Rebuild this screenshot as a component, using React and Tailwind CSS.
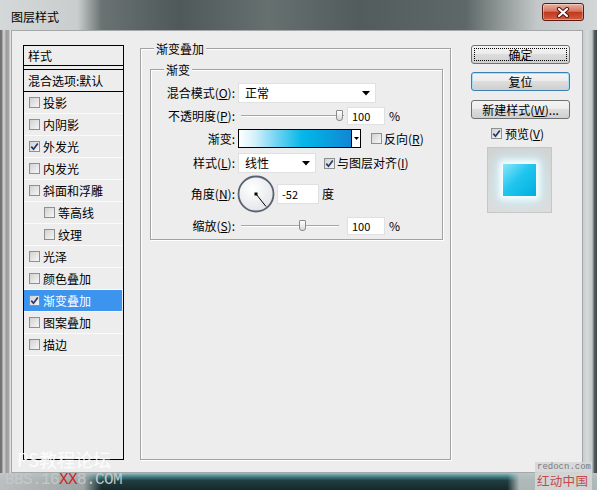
import React from 'react';

const Check = ({ checked }) => (
  <span className="inline-flex h-[11px] w-[11px] shrink-0 items-center justify-center border border-[#8e8f8f] bg-[linear-gradient(135deg,#d2d2d2,#f6f6f6)]">
    {checked && (
      <svg width="9" height="9" viewBox="0 0 9 9">
        <path d="M1.3 4.6 L3.5 7.2 L7.8 1.4" fill="none" stroke="#26386a" strokeWidth="1.7" />
      </svg>
    )}
  </span>
);

const Arrow = () => (
  <svg width="8" height="5" viewBox="0 0 8 5">
    <path d="M0 0 H8 L4 4.5 Z" fill="#000" />
  </svg>
);

const Select = ({ value, width }) => (
  <div className={`flex h-[20px] ${width} items-center justify-between border border-[#e0e0e0] bg-white pl-[6px] pr-[5px]`}>
    <span>{value}</span>
    <Arrow />
  </div>
);

const Field = ({ value, width, ml }) => (
  <div className={`flex h-[18px] ${width} ${ml} items-center border border-[#e0e0e0] bg-white pl-[4px] text-[11px]`}>
    {value}
  </div>
);

const Slider = ({ width, thumb }) => (
  <div className={`relative ml-[3px] flex h-[18px] ${width} items-center`}>
    <div className="h-[2px] w-full border-t border-[#a6a6a6] border-b border-b-white" />
    <div
      className="absolute top-[3px] h-[11px] w-[7px] rounded-b-[3px] rounded-t-[1px] border border-[#8a8a8a] bg-[linear-gradient(180deg,#ffffff,#d8d8d8)]"
      style={{ left: thumb }}
    />
  </div>
);

const Label = ({ children }) => (
  <div className="w-[85px] shrink-0 pr-[1px] text-right">{children}</div>
);

const items = [
  { t: '投影' },
  { t: '内阴影' },
  { t: '外发光', c: true },
  { t: '内发光' },
  { t: '斜面和浮雕' },
  { t: '等高线', sub: true },
  { t: '纹理', sub: true },
  { t: '光泽' },
  { t: '颜色叠加' },
  { t: '渐变叠加', c: true, sel: true },
  { t: '图案叠加' },
  { t: '描边' },
];

const btn =
  'relative flex h-[19px] w-[99px] items-center justify-center rounded-[3px] border bg-[linear-gradient(180deg,#f4f4f4_0%,#ececec_45%,#dddddd_50%,#cfcfcf_100%)]';

export default function App() {
  return (
    <div className="relative h-[490px] w-[597px] overflow-hidden bg-[#2a3636] font-['Noto_Sans_CJK_SC',sans-serif] text-[12px] leading-[14px] text-black">
      {/* title bar */}
      <div className="flex h-[30px] items-start bg-[linear-gradient(90deg,#d4d8d8_0%,#c9cdcd_13%,#6a7272_17%,#4f5959_30%,#66706f_45%,#525c5c_60%,#5e6868_78%,#9aa0a0_85%,#c4c8c8_90%,#d2d6d6_100%)]">
        <span className="ml-[11px] mt-[10px]">图层样式</span>
        <div className="ml-auto mr-[13px] mt-[3px] flex h-[18px] w-[42px] items-center justify-center rounded-[3px] border border-[#5a1a12] bg-[linear-gradient(180deg,#eab0a2_0%,#d8765f_45%,#c0391f_52%,#d45c40_100%)] shadow-[inset_0_0_0_1px_rgba(255,255,255,0.35)]">
          <svg width="14" height="11" viewBox="0 0 14 11">
            <path d="M3 2 L11 9 M11 2 L3 9" stroke="#4a1a12" strokeWidth="4.2" strokeLinecap="round" />
            <path d="M3 2 L11 9 M11 2 L3 9" stroke="#fff" strokeWidth="2.2" strokeLinecap="round" />
          </svg>
        </div>
      </div>

      <div className="flex h-[443px]">
        <div className="w-[11px] bg-[linear-gradient(90deg,#6e6e6e_0px,#7a7a7a_2px,#cfcfcf_3px,#c4c4c4_5px,#9c9c9c_6px,#a8a8a8_9px,#e2e2e2_10px)]" />

        {/* client */}
        <div className="flex flex-1 items-start border border-[#a4a8a8] bg-[#ededed]">
          {/* style list */}
          <div className="ml-[11px] mt-[14px] h-[415px] w-[101px] border border-black">
            <div className="flex h-[20px] items-center border-b border-black pl-[4px]">样式</div>
            <div className="mt-[3px] flex h-[23px] items-center border-y border-black pl-[4px]">混合选项:默认</div>
            {items.map((it) => (
              <div
                key={it.t}
                className={`flex h-[22px] items-center gap-[3px] border-b border-[#fafafa] ${it.sub ? 'pl-[20px]' : 'pl-[5px]'} ${it.sel ? 'mr-[1px] bg-[#3d94ef] text-white' : ''}`}
              >
                <Check checked={it.c} />
                <span>{it.t}</span>
              </div>
            ))}
          </div>

          {/* gradient overlay group */}
          <div className="ml-[16px] mt-[17px] h-[412px] w-[311px] border border-[#a2a2a2] shadow-[inset_1px_1px_0_#fff,1px_1px_0_#fff]">
            <div className="-mt-[7px] ml-[13px] w-fit bg-[#ededed] px-[2px]">渐变叠加</div>
            <div className="ml-[9px] mt-[13px] w-[293px] border border-[#a2a2a2] pb-[4px] shadow-[inset_1px_1px_0_#fff,1px_1px_0_#fff]">
              <div className="-mt-[7px] ml-[13px] w-fit bg-[#ededed] px-[2px]">渐变</div>

              <div className="mt-[6px] flex h-[20px] items-center">
                <Label>混合模式(<span className="underline">O</span>):</Label>
                <div className="ml-[2px]">
                  <Select value="正常" width="w-[138px]" />
                </div>
              </div>

              <div className="mt-[4px] flex h-[18px] items-center">
                <Label>不透明度(<span className="underline">P</span>):</Label>
                <div className="ml-[2px] flex items-center">
                  <Slider width="w-[103px]" thumb={95} />
                  <Field value="100" width="w-[38px]" ml="ml-[3px]" />
                  <span className="ml-[4px]">%</span>
                </div>
              </div>

              <div className="mt-[4px] flex h-[19px] items-center">
                <Label>渐变:</Label>
                <div className="ml-[2px] flex h-[19px] w-[123px] border border-black">
                  <div className="flex-1 bg-[linear-gradient(90deg,#ffffff_0%,#d4f1fa_14%,#6fd3f2_34%,#06b8e9_56%,#05a8e2_72%,#1286d3_100%)]" />
                  <div className="flex w-[9px] items-center justify-center border-l border-black bg-white">
                    <svg width="5" height="3" viewBox="0 0 5 3">
                      <path d="M0 0 H5 L2.5 3 Z" fill="#000" />
                    </svg>
                  </div>
                </div>
                <div className="ml-[10px] flex items-center gap-[2px]">
                  <Check />
                  <span>反向(<span className="underline">R</span>)</span>
                </div>
              </div>

              <div className="mt-[5px] flex h-[20px] items-center">
                <Label>样式(<span className="underline">L</span>):</Label>
                <div className="ml-[2px]">
                  <Select value="线性" width="w-[78px]" />
                </div>
                <div className="ml-[8px] flex items-center gap-[2px]">
                  <Check checked />
                  <span>与图层对齐(<span className="underline">I</span>)</span>
                </div>
              </div>

              <div className="mt-[2px] flex h-[37px] items-center">
                <Label>角度(<span className="underline">N</span>):</Label>
                <svg width="38" height="38" viewBox="0 0 38 38" className="ml-[1px]">
                  <defs>
                    <radialGradient id="dial" cx="40%" cy="35%" r="70%">
                      <stop offset="0%" stopColor="#ffffff" />
                      <stop offset="100%" stopColor="#e2e4e8" />
                    </radialGradient>
                  </defs>
                  <circle cx="19" cy="19" r="17.5" fill="url(#dial)" stroke="#5b6272" strokeWidth="1.8" />
                  <line x1="19" y1="19" x2="29" y2="31.5" stroke="#000" strokeWidth="1" />
                  <rect x="17.5" y="17.5" width="3" height="3" fill="#000" />
                </svg>
                <div className="ml-[2px] flex h-[20px] w-[42px] items-center border border-[#e0e0e0] bg-white pl-[4px] text-[11px]">-52</div>
                <span className="ml-[3px]">度</span>
              </div>

              <div className="mt-[5px] flex h-[18px] items-center">
                <Label>缩放(<span className="underline">S</span>):</Label>
                <div className="ml-[2px] flex items-center">
                  <Slider width="w-[98px]" thumb={58} />
                  <Field value="100" width="w-[38px]" ml="ml-[8px]" />
                  <span className="ml-[4px]">%</span>
                </div>
              </div>
            </div>
          </div>

          {/* buttons */}
          <div className="ml-[20px] mt-[14px] flex flex-col">
            <div className={`${btn} border-[#707070]`}>
              <span className="absolute inset-[2px] border border-dotted border-black" />
              确定
            </div>
            <div className={`${btn} mt-[8px] border-[#3c7fb1] shadow-[inset_0_0_0_1px_#a8def6]`}>复位</div>
            <div className={`${btn} mt-[9px] border-[#707070]`}>
              新建样式(<span className="underline">W</span>)...
            </div>
            <div className="ml-[20px] mt-[8px] flex h-[13px] items-center gap-[3px]">
              <Check checked />
              <span>预览(<span className="underline">V</span>)</span>
            </div>
            <div className="ml-[16px] mt-[7px] flex h-[66px] w-[65px] items-center justify-center border border-[#c6c6c6] bg-[linear-gradient(180deg,#d2d2d2,#dcdcdc)]">
              <div className="h-[32px] w-[33px] bg-[linear-gradient(135deg,#8ae6fb_0%,#22c6ee_45%,#00aee2_100%)] shadow-[0_0_6px_3px_#ffffff,0_0_12px_6px_#c8f4ff]" />
            </div>
          </div>
        </div>

        <div className="w-[14px] bg-[linear-gradient(90deg,#c8cccc_0%,#d6dada_30%,#c2c6c6_65%,#5a6262_80%,#3a4444_100%)]" />
      </div>

      {/* bottom frame */}
      <div className="h-[17px] bg-[linear-gradient(90deg,rgba(196,198,198,0.95)_0%,rgba(180,184,184,0.85)_14%,rgba(0,0,0,0)_17%,rgba(0,0,0,0)_85%,rgba(190,198,198,0.9)_87%),linear-gradient(180deg,#9cc0c2_0%,#4c8a90_18%,#1f3e42_45%,#17282a_100%)]" />

      {/* watermarks */}
      <div className="absolute left-[17px] top-[450px] text-[18px] leading-[18px] text-white/85">PS教程论坛</div>
      <div className="absolute left-[5px] top-[472px] font-['Liberation_Mono',monospace] text-[16px] leading-[16px] tracking-[-0.6px] text-[#c4c8c8]">
        BBS.16<span className="text-[#d42020]">XX</span>8.COM
      </div>
      <div className="absolute left-[535px] top-[462px] flex h-[28px] w-[57px] flex-col bg-[#d6d6d6]/90 pl-[2px]">
        <span className="font-['Liberation_Mono',monospace] text-[9px] leading-[11px] text-[#7a7a7a]">redocn.com</span>
        <span className="text-[12.5px] leading-[15px] tracking-[0.3px] text-[#c24a4a]">红动中国</span>
      </div>
    </div>
  );
}
